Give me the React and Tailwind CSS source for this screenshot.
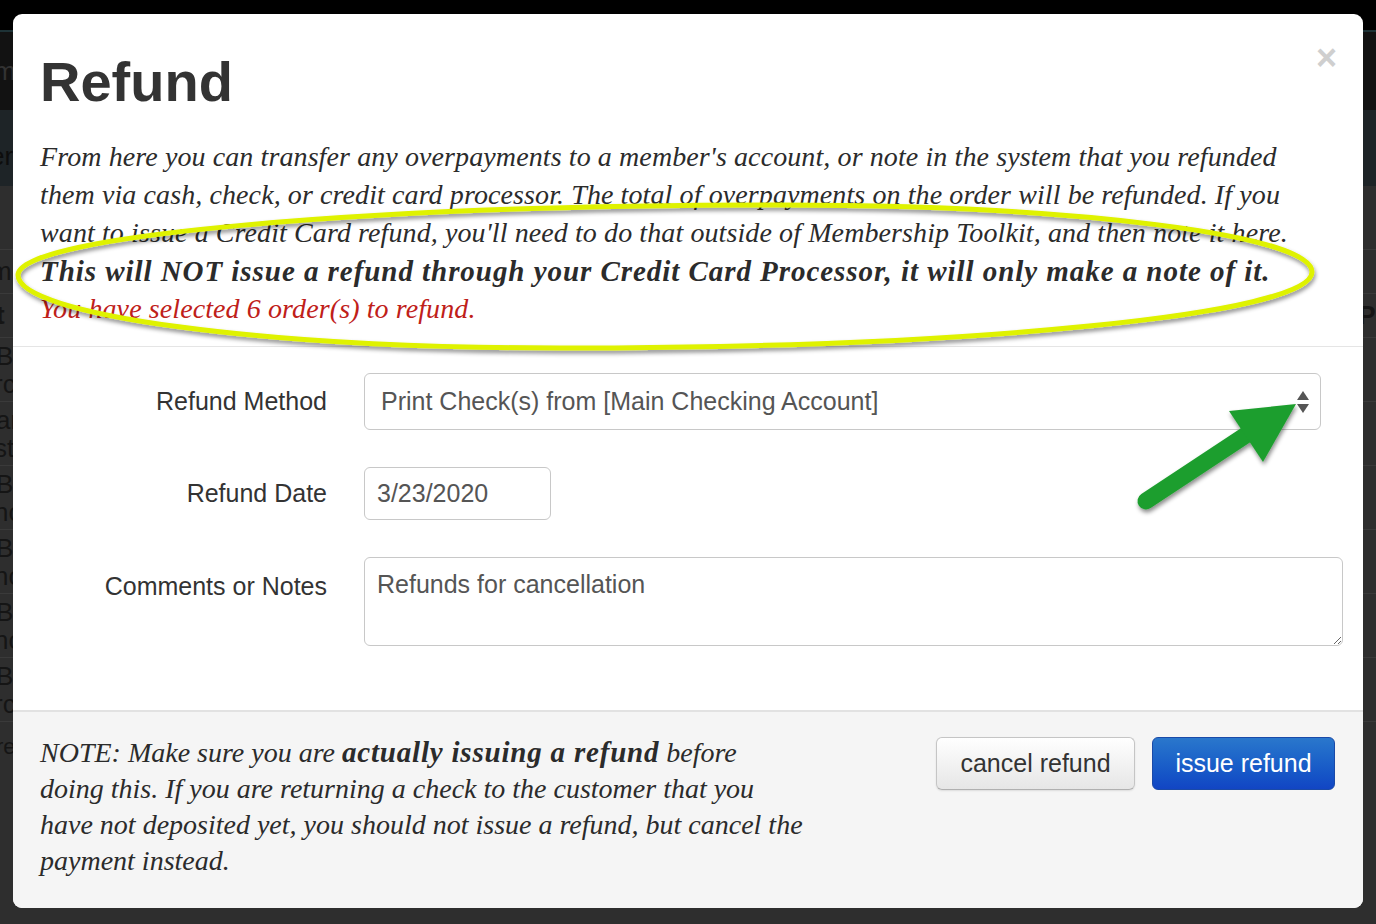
import React from 'react';

const serif = "font-['Liberation_Serif',Georgia,serif]";
const sans = "font-['Liberation_Sans',Helvetica,Arial,sans-serif]";

function Backdrop() {
  return (
    <div className={`${sans} w-[1376px] h-[924px] bg-[#2e2e2e] text-[#151515] text-[26px] overflow-hidden flex flex-col`}>
      <div className="h-[30px] bg-black" />
      <div className="h-[2px] bg-[#1d3236]" />
      <div className="h-[78px] bg-[#121212] flex items-center justify-between">
        <span className="-ml-[6px] text-[#333]">m</span>
      </div>
      <div className="h-[76px] bg-[#1e2427] flex items-end pb-[10px] justify-between">
        <span className="-ml-[10px] text-[#0d0d0d]">er</span>
      </div>
      <div className="h-[64px] border-b border-[#3a3a3a]" />
      <div className="h-[44px] border-b border-[#3a3a3a] flex items-center">
        <span className="-ml-[10px]">m</span>
      </div>
      <div className="h-[44px] border-b border-[#3a3a3a] flex items-center justify-between">
        <span className="-ml-[4px] font-bold">t</span>
        <span className="font-bold mr-[-14px]">Pa</span>
      </div>
      {[
        ['Br', 'rc'],
        ['ar', 'stu'],
        ['Br', 'nc'],
        ['Br', 'nc'],
        ['Br', 'nc'],
        ['Br', 'rc'],
      ].map((r, i) => (
        <div key={i} className="h-[64px] border-b border-[#3a3a3a] flex flex-col justify-center leading-[28px]">
          <span className="-ml-[4px]">{r[0]}</span>
          <span className="-ml-[6px]">{r[1]}</span>
        </div>
      ))}
      <div className="h-[60px] flex items-start pt-[8px] text-[22px]">
        <span className="-ml-[4px] w-[394px]">red</span>
        <span className="w-[360px]">tom@membershiptoolkit.com</span>
        <span className="w-[290px]">$0.00</span>
        <span className="w-[145px]">$0.00</span>
        <span className="w-[100px]">$0.00</span>
        <span>$0.00</span>
      </div>
    </div>
  );
}

function Annotations() {
  return (
    <svg className="absolute left-0 top-0 pointer-events-none" width="1376" height="924" viewBox="0 0 1376 924">
      <defs>
        <filter id="sh" x="-10%" y="-20%" width="120%" height="140%">
          <feDropShadow dx="1" dy="3" stdDeviation="2" floodColor="#000" floodOpacity="0.45" />
        </filter>
      </defs>
      <path
        d="M18 275 C18 236 359 205 780 205 C1074 205 1312 235 1312 272 C1312 314 975 348 560 348 C261 348 18 315 18 275 Z"
        fill="none"
        stroke="#dff200"
        strokeWidth="5"
        filter="url(#sh)"
      />
      <g filter="url(#sh)">
        <line x1="1146" y1="501" x2="1252" y2="431" stroke="#1f9e2f" strokeWidth="17" strokeLinecap="round" />
        <polygon points="1296,404 1229,411 1263,462" fill="#1f9e2f" />
      </g>
    </svg>
  );
}

export default function App() {
  return (
    <div className="relative w-[1376px] h-[924px] overflow-hidden">
      <Backdrop />

      {/* modal */}
      <div className="absolute left-[13px] top-[14px] w-[1350px] h-[894px] bg-white rounded-[9px] overflow-hidden flex flex-col">
        <div className="relative px-[27px] pt-[38px]">
          <h1 className={`${sans} text-[56px] font-bold leading-[60px] text-[#333]`}>Refund</h1>
          <span className={`${sans} absolute right-[26px] top-[26px] text-[36px] font-bold text-[#cfcfcf] leading-none`}>×</span>
        </div>

        <div className={`${serif} italic text-[28px] leading-[38px] text-[#2b2b2b] px-[27px] pt-[26px] pb-[18px] border-b border-[#e5e5e5] whitespace-nowrap tracking-[0.1px]`}>
          <div>From here you can transfer any overpayments to a member's account, or note in the system that you refunded</div>
          <div>them via cash, check, or credit card processor. The total of overpayments on the order will be refunded. If you</div>
          <div>want to issue a Credit Card refund, you'll need to do that outside of Membership Toolkit, and then note it here.</div>
          <div className="font-bold text-[29px] tracking-[0.95px]">This will NOT issue a refund through your Credit Card Processor, it will only make a note of it.</div>
          <div className="text-[#bf2019]">You have selected 6 order(s) to refund.</div>
        </div>

        <div className={`${sans} text-[25px] text-[#333] pt-[26px] flex flex-col gap-[37px] h-[363px]`}>
          <div className="flex items-center">
            <label className="w-[315px] text-right pr-[1px]">Refund Method</label>
            <div className="ml-[36px] w-[957px] h-[57px] border border-[#c8c8c8] rounded-[6px] flex items-center justify-between pl-[16px] pr-[10px] text-[#555]">
              <span>Print Check(s) from [Main Checking Account]</span>
              <svg width="14" height="26" viewBox="0 0 14 26">
                <polygon points="7,2 13,11 1,11" fill="#555" />
                <polygon points="1,15 13,15 7,24" fill="#555" />
              </svg>
            </div>
          </div>

          <div className="flex items-center">
            <label className="w-[315px] text-right pr-[1px]">Refund Date</label>
            <div className="ml-[36px] w-[187px] h-[53px] border border-[#c8c8c8] rounded-[6px] flex items-center pl-[12px] text-[#555]">
              3/23/2020
            </div>
          </div>

          <div className="flex items-start">
            <label className="w-[315px] text-right pr-[1px] pt-[11px]">Comments or Notes</label>
            <textarea
              readOnly
              defaultValue="Refunds for cancellation"
              className={`${sans} ml-[36px] w-[979px] h-[89px] border border-[#c8c8c8] rounded-[6px] px-[12px] pt-[10px] text-[25px] leading-[32px] text-[#555] outline-none resize`}
            />
          </div>
        </div>

        <div className="flex-1 bg-[#f5f5f5] border-t-2 border-[#e2e2e2] flex justify-between px-[27px] pt-[24px]">
          <div className={`${serif} italic text-[28px] leading-[36px] text-[#2b2b2b] whitespace-nowrap -mt-[2px]`}>
            <div>NOTE: Make sure you are <span className="font-bold text-[29px] tracking-[0.8px]">actually issuing a refund</span> before</div>
            <div>doing this. If you are returning a check to the customer that you</div>
            <div>have not deposited yet, you should not issue a refund, but cancel the</div>
            <div>payment instead.</div>
          </div>
          <div className={`${sans} flex gap-[17px] text-[25px] pt-[1px] pr-[1px]`}>
            <button className="w-[199px] h-[53px] rounded-[6px] border border-[#c5c5c5] border-b-[#b0b0b0] bg-gradient-to-b from-white to-[#e6e6e6] text-[#333] shadow-[0_1px_2px_rgba(0,0,0,0.1)]">
              cancel refund
            </button>
            <button className="w-[183px] h-[53px] rounded-[6px] border border-[#1a4aa8] bg-gradient-to-b from-[#2a77cc] to-[#1245c4] text-white">
              issue refund
            </button>
          </div>
        </div>
      </div>

      <Annotations />
    </div>
  );
}
